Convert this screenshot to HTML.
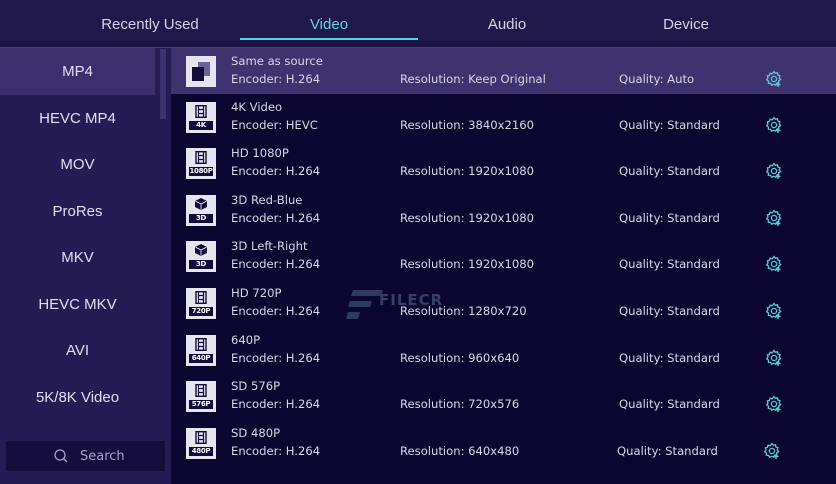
<!DOCTYPE html>
<html><head><meta charset="utf-8"><style>
*{margin:0;padding:0;box-sizing:border-box}
body{width:836px;height:484px;overflow:hidden;background:#0b0630;font-family:"DejaVu Sans","Liberation Sans",sans-serif;position:relative;color:#d8d6e6}
.top{position:absolute;left:0;top:0;width:836px;height:47px;background:#22194b}
.top .sh{position:absolute;left:0;top:41px;width:836px;height:6px;background:#1c1442}
.tab{position:absolute;top:16px;color:#d6d3e4;transform:translateX(-50%);font-family:"Liberation Sans",sans-serif;font-size:15px;white-space:nowrap}
.ul{position:absolute;left:240px;top:38px;width:178px;height:2px;background:#4fd6e0}
.side{position:absolute;left:0;top:47px;width:171px;height:437px;background:#261c54;border-top:1px solid #4a3f7a}
.si{position:absolute;left:0;width:155px;height:47px;text-align:center;line-height:47px;color:#e0def0;font-family:"Liberation Sans",sans-serif;font-size:15px}
.si.sel{background:#3b306d}
.sb{position:absolute;left:160px;top:1px;width:6px;height:70px;background:#3d3270}
.search{position:absolute;left:6px;top:393px;width:159px;height:30px;background:#150d3c;color:#a7a2c6;font-size:13px}
.row{position:absolute;left:171px;width:665px;height:47px}
.row.sel{background:#3e336e;border-top:1px solid #4a3f7a}
.ic{position:absolute;left:15px;top:8px;width:30px;height:31px;background:#e6e4ee}
.t{position:absolute;font-size:11.6px;color:#d8d6e6;white-space:nowrap}
.lab{position:absolute;left:3px;bottom:3px;width:24px;height:9px;background:#120c38;color:#fff;font-size:7px;line-height:9px;text-align:center;font-weight:bold;letter-spacing:-.3px}
.g{position:absolute;left:594px;top:22px}
</style></head><body>
<div class="top"><div class="sh"></div>
<div class="tab" style="left:150px">Recently Used</div>
<div class="tab" style="left:329px;color:#5fd9e2">Video</div>
<div class="tab" style="left:507px">Audio</div>
<div class="tab" style="left:686px">Device</div>
<div class="ul"></div></div>

<div class="side">
<div class="si sel" style="top:0">MP4</div>
<div class="si" style="top:47px">HEVC MP4</div>
<div class="si" style="top:93px">MOV</div>
<div class="si" style="top:140px">ProRes</div>
<div class="si" style="top:186px">MKV</div>
<div class="si" style="top:233px">HEVC MKV</div>
<div class="si" style="top:279px">AVI</div>
<div class="si" style="top:326px">5K/8K Video</div>
<div class="sb"></div>
<div class="search"><svg style="position:absolute;left:47px;top:7px" width="16" height="16" viewBox="0 0 16 16"><circle cx="7" cy="7" r="5" fill="none" stroke="#a7a2c6" stroke-width="1.3"/><path d="M10.5 10.5L14 14" stroke="#a7a2c6" stroke-width="1.3"/></svg><span style="position:absolute;left:74px;top:8px">Search</span></div>
</div>

<div id="rows"></div>
<div style="position:absolute;left:345px;top:288px;opacity:.45">
<svg width="40" height="34"><path d="M8 2h30l-2 6H6zM5 13h22l-2 6H3zM3 24h12l-2 7H1z" fill="#5a7a9a"/></svg>
<span style="position:absolute;left:34px;top:3px;font-size:15px;font-weight:bold;color:#6d84a6;letter-spacing:1px">FILECR</span></div>

<script>
(function(){
var d=[["Same as source","Encoder: H.264","Resolution: Keep Original","Quality: Auto","src"],
["4K Video","Encoder: HEVC","Resolution: 3840x2160","Quality: Standard","4K"],
["HD 1080P","Encoder: H.264","Resolution: 1920x1080","Quality: Standard","1080P"],
["3D Red-Blue","Encoder: H.264","Resolution: 1920x1080","Quality: Standard","3D"],
["3D Left-Right","Encoder: H.264","Resolution: 1920x1080","Quality: Standard","3D"],
["HD 720P","Encoder: H.264","Resolution: 1280x720","Quality: Standard","720P"],
["640P","Encoder: H.264","Resolution: 960x640","Quality: Standard","640P"],
["SD 576P","Encoder: H.264","Resolution: 720x576","Quality: Standard","576P"],
["SD 480P","Encoder: H.264","Resolution: 640x480","Quality: Standard","480P"]];
var h="";
var film='<svg style="position:absolute;left:9px;top:3px" width="12" height="13" viewBox="0 0 12 13"><rect x="1" y="0.7" width="10" height="11.6" fill="none" stroke="#120c38" stroke-width="1.4"/><path d="M3.5 1v11M8.5 1v11M3.5 4.5h5M3.5 8.5h5" stroke="#120c38" stroke-width="1.2"/></svg>';
var cube='<svg style="position:absolute;left:8px;top:2px" width="14" height="14" viewBox="0 0 14 14"><path d="M7 1L13 4V10L7 13L1 10V4Z" fill="#120c38"/><path d="M1.5 4.2L7 7L12.5 4.2M7 7V12.5" stroke="#e6e4ee" stroke-width="0.9" fill="none"/></svg>';
var gear='<svg width="18" height="18" viewBox="0 0 18 18"><g fill="none" stroke="#5fc8d8" stroke-width="1.3"><path d="M9 1.5l1.3 1.8 2.2-.5.4 2.2 2.1.8-.8 2.1 1.4 1.7-1.9 1.2.1 2.2-2.2.2-.9 2-2-1-1.9 1.1-1.2-1.9-2.2-.1.1-2.2-1.8-1.3 1.3-1.8-.6-2.1 2.1-.6.6-2.1 2.1.7z"/><circle cx="9" cy="9" r="2.6"/></g><path d="M13 12v5M10.5 14.5h5" stroke="#5fc8d8" stroke-width="1.4"/></svg>';
for(var i=0;i<d.length;i++){var r=d[i],yy=47+i*46.6;
var ic;if(r[4]=="src")ic='<div class="ic"><div style="position:absolute;left:12px;top:6px;width:12px;height:14px;background:#6b6396"></div><div style="position:absolute;left:6px;top:11px;width:12px;height:14px;background:#120c38"></div></div>';
else ic='<div class="ic">'+(r[4]=="3D"?cube:film)+'<div class="lab">'+r[4]+'</div></div>';
h+='<div class="row'+(i==0?' sel':'')+'" style="top:'+yy+'px">'+ic+
'<div class="t" style="left:60px;top:6px">'+r[0]+'</div><div class="t" style="left:60px;top:24px">'+r[1]+'</div>'+
'<div class="t" style="left:229px;top:24px">'+r[2]+'</div><div class="t" style="left:'+(i==8?446:448)+'px;top:24px">'+r[3]+'</div>'+
'<div class="g"'+(i==8?' style="left:592px"':'')+'>'+gear+'</div></div>';}
document.getElementById("rows").innerHTML=h;
})();
</script>
</body></html>
